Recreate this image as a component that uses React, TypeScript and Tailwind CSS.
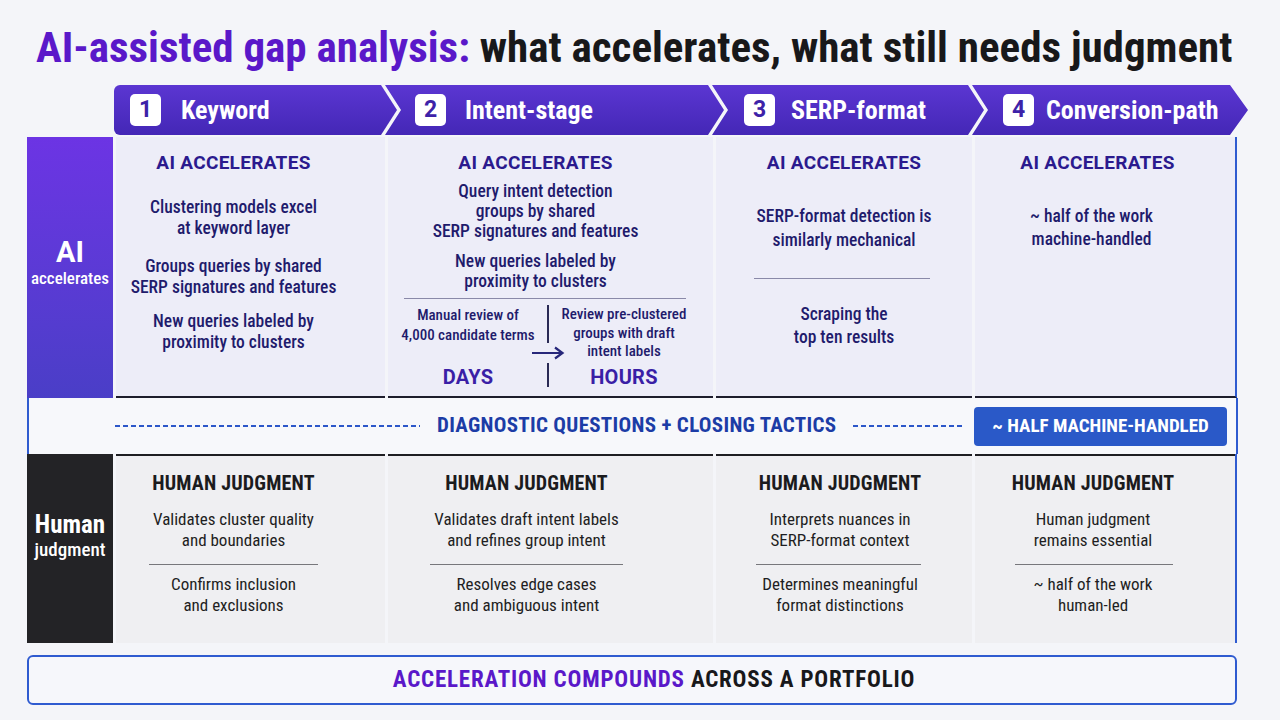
import React from "react";

const N = "font-['Liberation_Sans_Narrow','Roboto_Condensed',Roboto,sans-serif]";
const R = "font-['Roboto','Liberation_Sans',sans-serif]";

const tabs = [
    { n: "1", label: "Keyword", w: "w-[283px]", pl: "pl-[16px]", gap: "gap-[20px]", clip: "[clip-path:polygon(0_0,calc(100%_-_16px)_0,100%_50%,calc(100%_-_16px)_100%,0_100%)] rounded-l-[6px]" },
    { n: "2", label: "Intent-stage", w: "w-[339px]", pl: "pl-[30px]", gap: "gap-[19px]", clip: "[clip-path:polygon(0_0,calc(100%_-_16px)_0,100%_50%,calc(100%_-_16px)_100%,0_100%,16px_50%)] -ml-[12px]" },
    { n: "3", label: "SERP-format", w: "w-[272px]", pl: "pl-[32px]", gap: "gap-[16px]", clip: "[clip-path:polygon(0_0,calc(100%_-_16px)_0,100%_50%,calc(100%_-_16px)_100%,0_100%,16px_50%)] -ml-[12px]" },
    { n: "4", label: "Conversion-path", w: "w-[276px]", pl: "pl-[31px]", gap: "gap-[12px]", clip: "[clip-path:polygon(0_0,calc(100%_-_18px)_0,100%_50%,calc(100%_-_18px)_100%,0_100%,16px_50%)] -ml-[12px]" },
];

function Heading({ children, className = "" }: { children: React.ReactNode; className?: string }) {
    return (
        <div className={`${R} text-[19px] leading-[24px] font-bold tracking-[0.3px] text-[#2b1a8e] text-center ${className}`}>
            {children}
        </div>
    );
}

function HumanHead({ className = "" }: { className?: string }) {
    return (
        <div className={`${N} text-[20px] leading-[26px] font-bold tracking-[0.2px] text-[#1b1b1d] text-center ${className}`}>
            HUMAN JUDGMENT
        </div>
    );
}

function HumanCell({ a, b, pr, line }: { a: string[]; b: string[]; pr: string; line: string }) {
    return (
        <div className={`bg-[#efeff2] border-t-2 border-[#1e1e22] pt-[14px] ${pr}`}>
            <HumanHead />
            <div className={`${N} text-[17px] leading-[21px] text-[#1e1e22] text-center mt-[13px]`}>
                {a.map((t) => (
                    <div key={t}>{t}</div>
                ))}
            </div>
            <div className={`h-px bg-[#77777c] mt-[13px] ${line}`} />
            <div className={`${N} text-[17px] leading-[21px] text-[#1e1e22] text-center mt-[9px]`}>
                {b.map((t) => (
                    <div key={t}>{t}</div>
                ))}
            </div>
        </div>
    );
}

export default function App() {
    return (
        <div className="w-[1280px] h-[720px] bg-[#f4f5f9] overflow-hidden">
            <div className="h-[85px] pl-[36px] pt-[24px]">
                <h1 className={`${N} text-[43px] leading-[46px] font-bold whitespace-nowrap`}>
                    <span className="text-[#5a18c9]">AI-assisted gap analysis:</span>{" "}
                    <span className="text-[#18181a]">what accelerates, what still needs judgment</span>
                </h1>
            </div>

            <div className="ml-[114px] flex h-[50px]">
                {tabs.map((t) => (
                    <div
                        key={t.n}
                        className={`${t.w} ${t.pl} ${t.gap} ${t.clip} h-full shrink-0 flex items-center bg-linear-to-b from-[#5b36d2] to-[#4427b6]`}
                    >
                        <div className={`${R} w-[31px] h-[32px] rounded-[5px] bg-white flex items-center justify-center text-[23px] font-bold text-[#3d22a8]`}>
                            {t.n}
                        </div>
                        <span className={`${N} text-[26px] font-bold text-white`}>{t.label}</span>
                    </div>
                ))}
            </div>

            <div className="ml-[27px] mt-[2px] grid grid-cols-[86px_269px_325px_256px_262px] gap-x-[3px] w-[1210px]">
                {/* AI row */}
                <div className="h-[261px] bg-linear-to-b from-[#6c34e4] to-[#4a3ec7] flex flex-col items-center justify-center text-white pb-[12px]">
                    <div className={`${R} text-[29px] leading-[32px] font-bold`}>AI</div>
                    <div className={`${N} text-[17px] leading-[20px] font-medium`}>accelerates</div>
                </div>

                <div className={`h-[261px] bg-[#ededf8] border-b-2 border-[#1d1d2c] pt-[14px] pr-[34px] ${N} font-medium text-[#1f1b6c] text-[17.5px] leading-[21px] text-center`}>
                    <Heading>AI ACCELERATES</Heading>
                    <div className="mt-[22px]">
                        <div>Clustering models excel</div>
                        <div>at keyword layer</div>
                    </div>
                    <div className="mt-[17px]">
                        <div>Groups queries by shared</div>
                        <div>SERP signatures and features</div>
                    </div>
                    <div className="mt-[13px]">
                        <div>New queries labeled by</div>
                        <div>proximity to clusters</div>
                    </div>
                </div>

                <div className={`h-[261px] bg-[#ededf8] border-b-2 border-[#1d1d2c] pt-[14px] ${N} font-medium text-[#1f1b6c] text-center`}>
                    <div className="pr-[30px]">
                        <Heading>AI ACCELERATES</Heading>
                        <div className="mt-[6px] text-[17.5px] leading-[20px]">
                            <div>Query intent detection</div>
                            <div>groups by shared</div>
                            <div>SERP signatures and features</div>
                        </div>
                        <div className="mt-[10px] text-[17.5px] leading-[20px]">
                            <div>New queries labeled by</div>
                            <div>proximity to clusters</div>
                        </div>
                    </div>
                    <div className="h-px bg-[#8a89a8] mt-[7px] ml-[16px] mr-[27px]" />
                    <div className="flex h-[84px] mt-[6px]">
                        <div className="w-[160px] flex flex-col justify-between items-center">
                            <div className="text-[15px] leading-[20px]">
                                <div>Manual review of</div>
                                <div>4,000 candidate terms</div>
                            </div>
                            <div className={`${R} text-[20px] leading-[24px] font-bold text-[#3a1fa6] tracking-[0.3px]`}>DAYS</div>
                        </div>
                        <div className="w-0 flex flex-col items-center">
                            <div className="w-[1.5px] h-[38px] bg-[#2a2a55] shrink-0" />
                            <svg className="shrink-0 my-[3px]" width="34" height="14" viewBox="0 0 34 14">
                                <path d="M1 7H31M24 1.5L31.5 7L24 12.5" stroke="#27277a" strokeWidth="2.2" fill="none" />
                            </svg>
                            <div className="w-[1.5px] h-[24px] bg-[#2a2a55] shrink-0" />
                        </div>
                        <div className="w-[152px] flex flex-col justify-between items-center">
                            <div className="text-[15px] leading-[18.5px]">
                                <div>Review pre-clustered</div>
                                <div>groups with draft</div>
                                <div>intent labels</div>
                            </div>
                            <div className={`${R} text-[20px] leading-[24px] font-bold text-[#3a1fa6] tracking-[0.3px]`}>HOURS</div>
                        </div>
                    </div>
                </div>

                <div className={`h-[261px] bg-[#ededf8] border-b-2 border-[#1d1d2c] pt-[14px] ${N} font-medium text-[#1f1b6c] text-[17.5px] text-center`}>
                    <Heading>AI ACCELERATES</Heading>
                    <div className="mt-[29px] leading-[24px]">
                        <div>SERP-format detection is</div>
                        <div>similarly mechanical</div>
                    </div>
                    <div className="h-px bg-[#8a89a8] mt-[26px] ml-[38px] mr-[42px]" />
                    <div className="mt-[24px] leading-[23px]">
                        <div>Scraping the</div>
                        <div>top ten results</div>
                    </div>
                </div>

                <div className={`h-[261px] bg-[#ededf8] border-b-2 border-r-2 border-b-[#1d1d2c] border-r-[#2f5bd0] pt-[14px] ${N} font-medium text-[#1f1b6c] text-[17.5px] text-center`}>
                    <Heading className="pr-[15px]">AI ACCELERATES</Heading>
                    <div className="mt-[30px] leading-[23px] pr-[27px]">
                        <div>~ half of the work</div>
                        <div>machine-handled</div>
                    </div>
                </div>

                {/* band */}
                <div className="col-span-5 h-[56px] bg-[#f7f8fb] border-l-2 border-r-2 border-[#2f5bd0] flex items-center -mr-[1px]">
                    <div className="w-[86px] shrink-0" />
                    <div className="w-[305px] h-[2px] shrink-0 bg-[repeating-linear-gradient(90deg,#2c57c9_0_5px,transparent_5px_8px)]" />
                    <span className={`${N} mx-[17px] text-[21px] font-bold tracking-[0.3px] text-[#1c3ca6] whitespace-nowrap`}>
                        DIAGNOSTIC QUESTIONS + CLOSING TACTICS
                    </span>
                    <div className="flex-1 h-[2px] bg-[repeating-linear-gradient(90deg,#2c57c9_0_5px,transparent_5px_8px)]" />
                    <div className={`${N} ml-[11px] mr-[9px] w-[253px] h-[39px] shrink-0 rounded-[4px] bg-[#2a59c8] flex items-center justify-center text-white text-[19px] font-bold`}>
                        ~ HALF MACHINE-HANDLED
                    </div>
                </div>

                {/* human row */}
                <div className="h-[189px] bg-[#232326] flex flex-col items-center justify-center text-white pb-[26px]">
                    <div className={`${N} text-[25px] leading-[28px] font-bold`}>Human</div>
                    <div className={`${N} text-[19px] leading-[22px] font-medium`}>judgment</div>
                </div>
                <HumanCell
                    pr="pr-[34px]"
                    line="mx-[33px]"
                    a={["Validates cluster quality", "and boundaries"]}
                    b={["Confirms inclusion", "and exclusions"]}
                />
                <HumanCell
                    pr="pr-[48px]"
                    line="mx-[42px]"
                    a={["Validates draft intent labels", "and refines group intent"]}
                    b={["Resolves edge cases", "and ambiguous intent"]}
                />
                <HumanCell
                    pr="pr-[8px]"
                    line="ml-[40px] mr-[43px]"
                    a={["Interprets nuances in", "SERP-format context"]}
                    b={["Determines meaningful", "format distinctions"]}
                />
                <div className="border-r-2 border-[#2f5bd0]">
                    <HumanCell
                        pr="pr-[24px] h-full"
                        line="ml-[40px] mr-[38px]"
                        a={["Human judgment", "remains essential"]}
                        b={["~ half of the work", "human-led"]}
                    />
                </div>
            </div>

            <div className="ml-[27px] mt-[12px] w-[1210px] h-[50px] rounded-[6px] border-2 border-[#2f5bd0] bg-[#f6f7fb] flex items-center justify-center pl-[44px]">
                <span className={`${N} text-[23px] font-bold tracking-[0.8px] whitespace-nowrap`}>
                    <span className="text-[#5a18c9]">ACCELERATION COMPOUNDS</span>{" "}
                    <span className="text-[#18181a]">ACROSS A PORTFOLIO</span>
                </span>
            </div>
        </div>
    );
}
